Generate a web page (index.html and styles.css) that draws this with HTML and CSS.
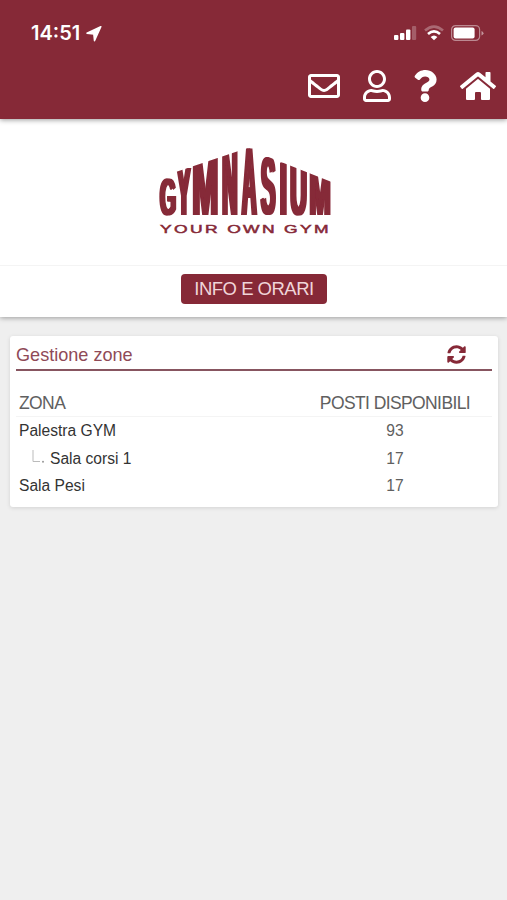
FILE: index.html
```html
<!DOCTYPE html>
<html lang="it">
<head>
  <meta charset="UTF-8">
  <meta name="viewport" content="width=device-width, initial-scale=1">
  <title>Gymnasium</title>
  <link rel="stylesheet" href="styles.css">
</head>
<body>

  <header class="header">
    <div class="status-bar">
      <div class="clock">
        <span>14:51</span>
        <svg width="16" height="16" viewBox="0 0 16 16"><path d="M14.8.8 1 7.2l6.8.8.7 6.7z" fill="#fff" stroke="#fff" stroke-width="1.5" stroke-linejoin="round"/></svg>
      </div>
      <div class="status-icons">
        <svg width="23" height="16" viewBox="0 0 23 16" fill="#fff">
          <rect x="0" y="10" width="4.4" height="5" rx="1"/>
          <rect x="6" y="8" width="4.4" height="7" rx="1"/>
          <rect x="12" y="4.5" width="4.4" height="10.5" rx="1"/>
          <rect x="18" y="1" width="4.2" height="14" rx="1" opacity=".25"/>
        </svg>
        <svg width="20" height="16" viewBox="0 0 20 16" fill="none" stroke="#fff" stroke-width="2.6">
          <path d="M1 5.6Q10-2.2 19 5.6" opacity=".3"/>
          <path d="M4 9Q10 3.6 16 9"/>
          <path d="M6.6 12Q10 9 13.4 12L10 15.2z" fill="#fff" stroke="none"/>
        </svg>
        <svg width="33" height="16" viewBox="0 0 33 16" fill="#fff">
          <rect x=".6" y=".6" width="28" height="14.8" rx="4" fill="none" stroke="#fff" stroke-width="1.2" opacity=".45"/>
          <rect x="2.6" y="2.6" width="21" height="10.8" rx="2"/>
          <path d="M30.5 6v4.4q2-.9 2-2.2t-2-2.2z" opacity=".5"/>
        </svg>
      </div>
    </div>
    <nav class="nav">
      <svg width="32" height="32" viewBox="0 0 512 512"><path d="M464 64H48C21.49 64 0 85.49 0 112v288c0 26.51 21.49 48 48 48h416c26.51 0 48-21.49 48-48V112c0-26.51-21.49-48-48-48zm0 48v40.805c-22.422 18.259-58.168 46.651-134.587 106.49-16.841 13.247-50.201 45.072-73.413 44.701-23.208.375-56.579-31.459-73.413-44.701C106.18 199.465 70.425 171.067 48 152.805V112h416zM48 400V214.398c22.914 18.251 55.409 43.862 104.938 82.646 21.857 17.205 60.134 55.186 103.062 54.955 42.717.231 80.509-37.199 103.053-54.947 49.528-38.783 82.032-64.401 104.947-82.653V400H48z"/></svg>
      <svg width="28" height="32" viewBox="0 0 448 512"><path d="M313.6 304c-28.7 0-42.5 16-89.6 16-47.1 0-60.8-16-89.6-16C60.2 304 0 364.2 0 438.4V464c0 26.5 21.5 48 48 48h352c26.5 0 48-21.5 48-48v-25.6c0-74.2-60.2-134.4-134.4-134.4zM400 464H48v-25.6c0-47.6 38.8-86.4 86.4-86.4 14.6 0 38.3 16 89.6 16 51.7 0 74.9-16 89.6-16 47.6 0 86.4 38.8 86.4 86.4V464zM224 288c79.5 0 144-64.5 144-144S303.5 0 224 0 80 64.5 80 144s64.5 144 144 144zm0-240c52.9 0 96 43.1 96 96s-43.1 96-96 96-96-43.1-96-96 43.1-96 96-96z"/></svg>
      <svg width="24" height="32" viewBox="0 0 384 512"><path d="M202.021 0C122.202 0 70.503 32.703 29.914 91.026c-7.363 10.58-5.093 25.086 5.178 32.874l43.138 32.709c10.373 7.865 25.132 6.026 33.253-4.148 25.049-31.381 43.63-49.449 82.757-49.449 30.764 0 68.816 19.799 68.816 49.631 0 22.552-18.617 34.134-48.993 51.164-35.423 19.86-82.299 44.576-82.299 106.405V320c0 13.255 10.745 24 24 24h72.471c13.255 0 24-10.745 24-24v-5.773c0-42.86 125.268-44.645 125.268-160.627C377.504 66.256 286.902 0 202.021 0zM192 373.459c-38.196 0-69.271 31.075-69.271 69.271 0 38.195 31.075 69.27 69.271 69.27s69.271-31.075 69.271-69.271-31.075-69.27-69.271-69.27z"/></svg>
      <svg width="36" height="32" viewBox="0 0 576 512"><path d="M280.37 148.26L96 300.11V464a16 16 0 0 0 16 16l112.06-.29a16 16 0 0 0 15.92-16V368a16 16 0 0 1 16-16h64a16 16 0 0 1 16 16v95.64a16 16 0 0 0 16 16.05L464 480a16 16 0 0 0 16-16V300L295.67 148.26a12.19 12.19 0 0 0-15.3 0zM571.6 251.47L488 182.56V44.05a12 12 0 0 0-12-12h-56a12 12 0 0 0-12 12v72.61L318.47 43a48 48 0 0 0-61 0L4.34 251.47a12 12 0 0 0-1.6 16.9l25.5 31A12 12 0 0 0 45.15 301l235.22-193.74a12.19 12.19 0 0 1 15.3 0L530.9 301a12 12 0 0 0 16.9-1.6l25.5-31a12 12 0 0 0-1.7-16.93z"/></svg>
    </nav>
  </header>

  <section class="club">
    <div class="logo">
      <svg width="176" height="92" viewBox="157 146 176 92">
        <!-- thickens the stems sideways only -->
        <filter id="heavy" x="-5%" width="110%">
          <feOffset in="SourceGraphic" dx="-1.5" result="a"/>
          <feOffset in="SourceGraphic" dx="1.5" result="b"/>
          <feMerge><feMergeNode in="a"/><feMergeNode in="SourceGraphic"/><feMergeNode in="b"/></feMerge>
        </filter>
        <!-- letters follow a roof line that peaks over the A -->
        <clipPath id="roof"><path d="M157 178.3 243 149.5V146H254V151.2L331 181.7V240H157z"/></clipPath>
        <g class="logo-name" clip-path="url(#roof)" filter="url(#heavy)">
          <text transform="translate(159.4 214.5) scale(2.05 5.2)">G</text>
          <text transform="translate(177 215) scale(1.9 6.85)">Y</text>
          <text transform="translate(191.7 215) scale(3.14 8.3)">M</text>
          <text transform="translate(221.7 215) scale(2.1 9.25)">N</text>
          <text transform="translate(241.6 215) scale(2 9.65)">A</text>
          <text transform="translate(260.4 214.2) scale(2.15 8.2)">S</text>
          <text transform="translate(279.3 215) scale(2.6 7.65)">I</text>
          <text transform="translate(289.7 214.5) scale(2.3 7.25)">U</text>
          <text transform="translate(308.9 215) scale(2.54 6.2)">M</text>
        </g>
        <text class="logo-claim" x="160" y="232.6" textLength="171" lengthAdjust="spacingAndGlyphs">YOUR OWN GYM</text>
      </svg>
    </div>
    <div class="club-actions">
      <a class="btn">INFO E ORARI</a>
    </div>
  </section>

  <main class="card">
    <div class="card-title">
      <h1>Gestione zone</h1>
      <svg width="19" height="19" viewBox="0 0 512 512"><path d="M370.72 133.28C339.458 104.008 298.888 87.962 255.848 88c-77.458.068-144.328 53.178-162.791 126.85-1.344 5.363-6.122 9.15-11.651 9.15H24.103c-7.498 0-13.194-6.807-11.807-14.176C33.933 94.924 134.813 8 256 8c66.448 0 126.791 26.136 171.315 68.685L463.03 40.97C478.149 25.851 504 36.559 504 57.941V192c0 13.255-10.745 24-24 24H345.941c-21.382 0-32.09-25.851-16.971-40.971l41.75-41.749zM32 296h134.059c21.382 0 32.09 25.851 16.971 40.971l-41.75 41.75c31.262 29.273 71.835 45.319 114.876 45.28 77.418-.07 144.315-53.144 162.787-126.849 1.344-5.363 6.122-9.15 11.651-9.15h57.304c7.498 0 13.194 6.807 11.807 14.176C478.067 417.076 377.187 504 256 504c-66.448 0-126.791-26.136-171.315-68.685L48.97 471.03C33.851 486.149 8 475.441 8 454.059V320c0-13.255 10.745-24 24-24z"/></svg>
    </div>
    <div class="zones">
      <div class="row row-head"><span>ZONA</span><span class="seats">POSTI DISPONIBILI</span></div>
      <div class="row"><span>Palestra GYM</span><span class="seats">93</span></div>
      <div class="row row-child">
        <span><svg width="13" height="14" viewBox="0 0 13 14"><path d="M1 0v11.5h7" fill="none" stroke="#bbb"/><circle cx="11" cy="11.7" r="1" fill="#999"/></svg>Sala corsi 1</span>
        <span class="seats">17</span>
      </div>
      <div class="row"><span>Sala Pesi</span><span class="seats">17</span></div>
    </div>
  </main>

</body>
</html>
```
FILE: styles.css
```css
* {
  box-sizing: border-box;
}

body {
  margin: 0;
  min-height: 100vh;
  background: #efefef;
  font-family: "Liberation Sans", Arial, sans-serif;
  color: #333;
}

svg {
  display: block;
  flex-shrink: 0;
}

.header {
  position: relative; /* keeps the shadow over the white panel */
  height: 119px;
  background: #862937;
  box-shadow: 0 1px 5px rgba(0, 0, 0, 0.4);
}

.status-bar {
  display: flex;
  justify-content: space-between;
  height: 70px;
  padding: 21px 23px 0 31px;
}

.clock {
  display: flex;
  gap: 6px;
  height: 25px;
  align-items: center;
  font: 600 20px/25px Inter, sans-serif;
  color: #fff;
}

.status-icons {
  display: flex;
  gap: 7px;
  padding-top: 4px;
}

.nav {
  display: flex;
  justify-content: flex-end;
  gap: 22.5px;
  padding-right: 11.5px;
}

.nav svg {
  fill: #fff;
}

.club {
  background: #fff;
  box-shadow: 0 1px 5px rgba(0, 0, 0, 0.35);
}

.logo {
  height: 147px;
  padding: 27px 0 0 157px;
  border-bottom: 1px solid #f4f4f4;
}

.logo-name text {
  font-size: 10px;
  font-weight: bold;
  fill: #862937;
}

.logo-claim {
  font-size: 11.8px;
  letter-spacing: 1.6px;
  fill: #862937;
  stroke: #862937;
  stroke-width: 0.5px;
}

.club-actions {
  display: flex;
  justify-content: center;
  height: 51px;
  padding: 8px 0 0 1px;
}

.btn {
  width: 146px;
  height: 30px;
  border-radius: 4px;
  background: #862937;
  color: #f0d5d9;
  font-size: 18.5px;
  line-height: 30px;
  letter-spacing: -0.5px;
  text-align: center;
}

.card {
  height: 171px;
  margin: 19px 9px 0 10px;
  padding: 0 6px;
  border-radius: 3px;
  background: #fff;
  box-shadow: 0 1px 4px rgba(0, 0, 0, 0.12);
}

.card-title {
  display: flex;
  justify-content: space-between;
  align-items: center;
  height: 35px;
  padding: 3px 26px 0 0;
  border-bottom: 2px solid #875560;
}

.card-title h1 {
  margin: 0;
  padding-top: 2px;
  font-size: 18.1px;
  font-weight: normal;
  color: #8f4a57;
}

.card-title svg {
  fill: #862937;
}

.zones {
  padding-top: 18px;
}

.row {
  display: flex;
  justify-content: space-between;
  height: 27.4px;
  padding-left: 3px;
  font-size: 15.6px;
  line-height: 28px;
}

.row-head {
  height: 28px;
  border-bottom: 1px solid #f4f4f4;
  font-size: 17.5px;
  letter-spacing: -0.6px;
  color: #606060;
}

.seats {
  width: 194px;
  text-align: center;
  color: #606060;
}

.row-child {
  line-height: 29px;
}

.row-child span:first-child {
  display: flex;
  padding-left: 13px;
}

.row-child svg {
  margin: 6px 5px 0 0;
}
```
